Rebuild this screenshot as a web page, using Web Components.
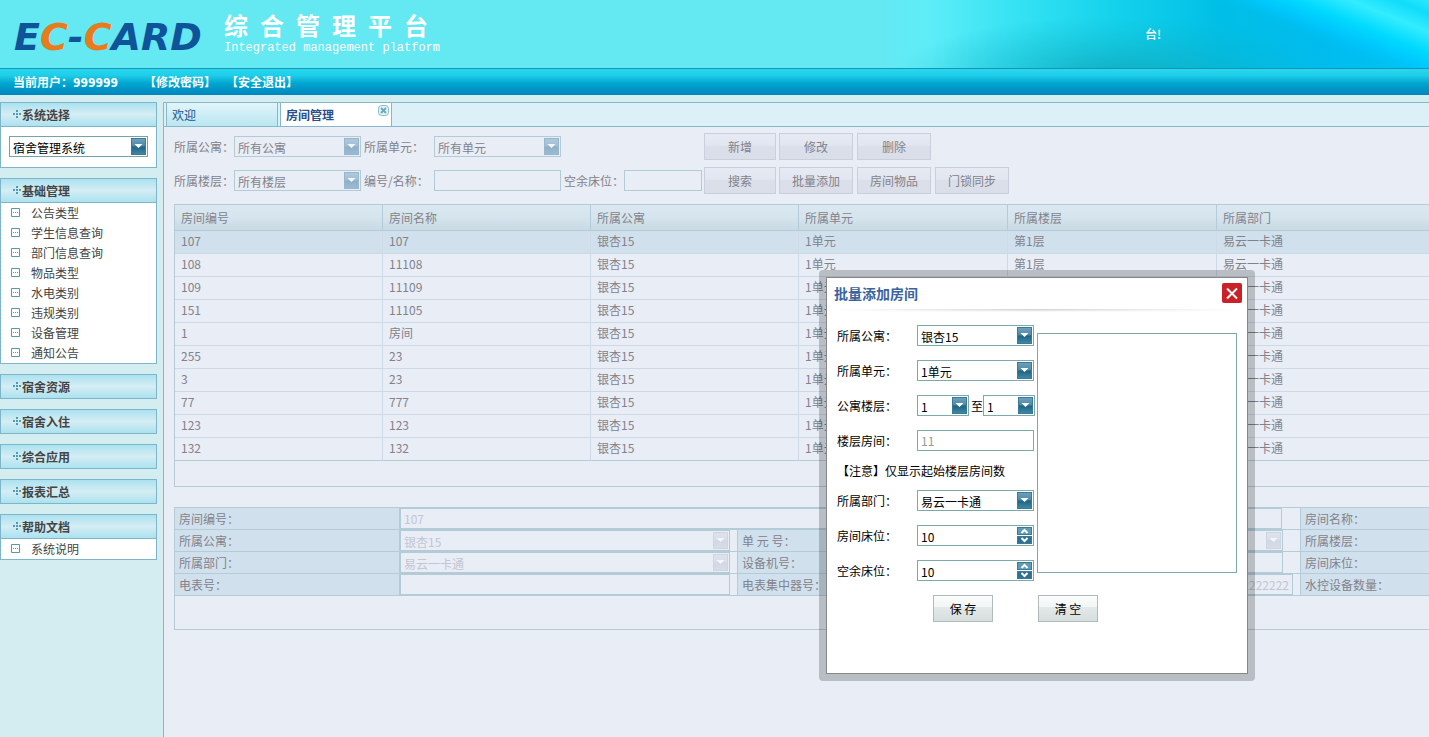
<!DOCTYPE html>
<html lang="zh-CN">
<head>
<meta charset="utf-8">
<title>EC-CARD 综合管理平台</title>
<style>
  html, body { margin: 0; height: 100%; }
  body { font: 12px/20px "Noto Sans CJK SC", sans-serif; color: #444; background: #d4edf0; }
</style>
</head>
<body>
<ec-app></ec-app>
<script>
const base = `
  :host, *, *::before, *::after { box-sizing: border-box; }
  a { color: inherit; text-decoration: none; }
  input, select, textarea, button { font: inherit; color: inherit; margin: 0; border-radius: 0; outline: 0; opacity: 1; }
  input, textarea { border: 1px solid var(--line); background: var(--field); padding: 0 3px; resize: none; }
  input { height: 21px; min-width: 0; line-height: 19px; }
  button { padding: 0; cursor: pointer; }
  .sel { display: inline-block; flex: none; position: relative; height: 21px; vertical-align: top; }
  .sel select { appearance: none; display: block; width: 100%; height: 21px; line-height: 19px; padding: 1px 20px 0 3px; border: 1px solid var(--line); background: var(--field); }
  .sel svg { position: absolute; right: 2px; top: 2px; width: 15px; height: 17px; background: var(--arrow); border: 1px solid var(--arrowline); pointer-events: none; }
`;
const arrow = '<svg viewBox="0 0 13 15" aria-hidden="true"><path d="M2.500 5h8l-4 4z" fill="var(--tip, #fff)"/></svg>';
const sel = (id, value, width, off) =>
  `<span class="sel" style="width:${width}px"><select id="${id}"${off ? ' disabled' : ''}><option>${value}</option></select>${arrow}</span>`;

const define = (name, css, html) => customElements.define(name, class extends HTMLElement {
  constructor() {
    super();
    const content = typeof html === 'function' ? html(this) : html;
    this.attachShadow({ mode: 'open' }).innerHTML = `<style>${base}${css}</style>${content}`;
  }
});

define('ec-banner', `
  :host { display: flex; align-items: center; position: relative; height: 68px; overflow: hidden; background: #64e8f2; color: #fff; }
  svg.sky { position: absolute; right: 0; top: 0; width: 549px; height: 68px; }
  .logo { position: relative; margin-left: 14px; padding-top: 6px; width: 210px; white-space: nowrap; font: italic bold 38px/38px "DejaVu Sans", sans-serif; color: #0f5499; }
  .logo b { color: #e87c1c; }
  .name { position: relative; }
  h1 { margin: 0; font: 700 24px/28px "Liberation Sans", "Noto Sans CJK SC", sans-serif; white-space: pre; }
  p { margin: 0; font: 12px/14px "Liberation Mono", monospace; }
  .news { position: absolute; right: 268px; top: 24px; line-height: 20px; font-weight: 500; }
`, `
  <svg class="sky" viewBox="0 0 549 68" preserveAspectRatio="none" aria-hidden="true">
    <defs>
      <linearGradient id="a"><stop offset="0" stop-color="#64e8f2"/><stop offset=".09" stop-color="#5eedf8"/><stop offset=".25" stop-color="#35e2f3"/><stop offset=".43" stop-color="#14d2ec"/><stop offset=".62" stop-color="#00bfe6"/><stop offset=".8" stop-color="#00bcee"/><stop offset="1" stop-color="#00c4f4"/></linearGradient>
      <radialGradient id="b" cx=".5" cy=".5" r=".5"><stop offset="0" stop-color="#10a4b8" stop-opacity=".8"/><stop offset="1" stop-color="#10b4c8" stop-opacity="0"/></radialGradient>
      <linearGradient id="c" gradientUnits="userSpaceOnUse" x1="400" y1="28" x2="430" y2="-47"><stop offset="0" stop-color="#00bdf0" stop-opacity="0"/><stop offset=".2" stop-color="#00c8ff" stop-opacity=".8"/><stop offset=".4" stop-color="#00daff"/><stop offset=".64" stop-color="#34ecff"/><stop offset=".85" stop-color="#10dcfa"/><stop offset="1" stop-color="#2ae8ff"/></linearGradient>
    </defs>
    <path fill="url(#a)" d="M0 0h549v68H0z"/>
    <ellipse cx="235" cy="76" rx="220" ry="60" fill="url(#b)"/>
    <path fill="url(#c)" d="M330 0L500 68h49V0z"/>
  </svg>
  <div class="logo">E<b>C</b>-<b>C</b>ARD</div>
  <div class="name"><h1>综\u2002合\u2002管\u2002理\u2002平\u2002台</h1><p>Integrated management platform</p></div>
  <div class="news">台!</div>
`);

define('ec-userbar', `
  :host { display: flex; align-items: center; height: 27px; padding-left: 13px; border-top: 1px solid #2190b4; background: linear-gradient(#25d8ef, #1fcde8 25%, #00a6d0 55%, #0086bd); color: #fff; font-weight: 700; }
  span { font-family: "DejaVu Sans Condensed", "DejaVu Sans", sans-serif; }
  .me { margin-right: 26px; } a { margin-right: 10px; }
`, `<div class="me">当前用户：<span>999999</span></div><a href="#">【修改密码】</a><a href="#">【安全退出】</a>`);

define('ec-panel', `
  :host { display: block; border: 1px solid #7fb5c9; background: #fff; }
  h2 { margin: 0; height: 23px; padding: 0 0 0 12px; display: flex; align-items: center; font-size: 12px; line-height: 20px; color: #444; background: linear-gradient(#abe2f0, #d5edf3 50%, #abe2f0); }
  svg { width: 9px; height: 9px; margin: 0; fill: #4e9bb3; }
  .body { border-top: 1px solid #7fb5c9; }
  :host([closed]) .body { display: none; }
`, el => `<h2><svg viewBox="0 0 9 9" aria-hidden="true"><path d="M3 0h2v2H3zM0 3h2v2H0zM3 3h2v2H3zM6 3h2v2H6zM3 6h2v2H3z"/></svg>${el.getAttribute('heading')}</h2><div class="body"><slot></slot></div>`);

define('ec-menu', `
  :host { display: block; }
  ul { list-style: none; margin: 0; padding: 0; }
  li { height: 20px; }
  a { display: flex; align-items: center; gap: 11px; padding-left: 10px; line-height: 20px; }
  svg { width: 9px; height: 9px; margin-bottom: 2px; }
`, el => `<ul>${el.getAttribute('items').split(' ').map(t =>
  `<li><a href="#"><svg viewBox="0 0 9 9" aria-hidden="true"><path d="M.5.5h8v8h-8z" fill="#fff" stroke="#4e9bb3"/><path d="M2 4h1v1H2zM4 4h1v1H4zM6 4h1v1H6z" fill="#4e9bb3"/></svg>${t}</a></li>`).join('')}</ul>`);

define('ec-sidebar', `
  :host { display: flex; flex-direction: column; gap: 10px; width: 157px; flex: none; --line: #72a5aa; --field: #fff; --arrow: linear-gradient(#6d9fba, #4c88a6 48%, #1c6385 52%, #4187a3); --arrowline: #3a7a99; }
  ec-panel[closed] { height: 25px; }
  .pick { height: 40px; padding: 9px 8px; color: #000; }
`, `
  <ec-panel heading="系统选择"><div class="pick">${sel('system', '宿舍管理系统', 139).replace('<select', '<select aria-label="系统选择"')}</div></ec-panel>
  <ec-panel heading="基础管理"><ec-menu items="公告类型 学生信息查询 部门信息查询 物品类型 水电类别 违规类别 设备管理 通知公告"></ec-menu></ec-panel>
  <ec-panel heading="宿舍资源" closed></ec-panel>
  <ec-panel heading="宿舍入住" closed></ec-panel>
  <ec-panel heading="综合应用" closed></ec-panel>
  <ec-panel heading="报表汇总" closed></ec-panel>
  <ec-panel heading="帮助文档"><ec-menu items="系统说明"></ec-menu></ec-panel>
`);

define('ec-tabs', `
  :host { display: flex; gap: 2px; height: 24px; padding-left: 2px; border-bottom: 1px solid #86b8c9; background: #dcf0f8; color: #27508c; }
  .tab { display: flex; justify-content: space-between; width: 112px; padding: 2px 2px 0 5px; border: solid #86b8c9; border-width: 0 1px; background: linear-gradient(#e2f5fa, #b9e7f1); }
  .on { background: #fff; font-weight: 700; }
  button { width: 11px; height: 11px; border: 0; background: none; display: block; }
  svg { display: block; }
`, `<div class="tab"><a href="#">欢迎</a></div><div class="tab on"><a href="#">房间管理</a>
  <button aria-label="关闭"><svg width="11" height="11" viewBox="0 0 11 11"><rect x=".5" y=".5" width="10" height="10" rx="3" fill="#e2f4f7" stroke="#86bcca"/><path d="M3 3l5 5M8 3l-5 5" stroke="#6fa9ba" stroke-width="2"/></svg></button></div>`);

define('ec-filter', `
  :host { display: block; }
  form { display: grid; grid-template-columns: 60px 130px 70px 130px 60px 80px 75px 78px 78px 74px; grid-auto-rows: 27px; row-gap: 7px; align-items: center; }
  label { white-space: nowrap; }
  input { width: 127px; } #spare { width: 78px; }
  button { width: 74px; height: 27px; border: 1px solid #cacfdd; background: linear-gradient(#e6eaf3, #e2e6f0 45%, #dadfea 50%, #d9dee9); }
  .first { width: 72px; grid-column: 7; }
`, `<form onsubmit="return false">
  <label for="apt">所属公寓：</label>${sel('apt', '所有公寓', 127)}
  <label for="unit">所属单元：</label>${sel('unit', '所有单元', 127)}
  <button class="first">新增</button><button>修改</button><button>删除</button>
  <label for="floor" style="grid-column:1">所属楼层：</label>${sel('floor', '所有楼层', 127)}
  <label for="name">编号/名称：</label><input id="name">
  <label for="spare">空余床位：</label><input id="spare">
  <button class="first">搜索</button><button>批量添加</button><button>房间物品</button><button>门锁同步</button>
</form>`);

const rooms = [['107','107'],['108','11108'],['109','11109'],['151','11105'],['1','房间'],['255','23'],['3','23'],['77','777'],['123','123'],['132','132']];
define('ec-grid', `
  :host { display: block; min-width: 1460px; border: 1px solid #b5cbd8; }
  table { width: 100%; table-layout: fixed; border-collapse: separate; border-spacing: 0; }
  th, td { padding: 0 6px; font-weight: 400; text-align: left; border-right: 1px solid #d0d9e8; }
  th { height: 26px; background: linear-gradient(#dbe8f1, #d5e4ed 50%, #c9dae4); border-color: #b5cbd8; border-bottom: 1px solid #b5cbd8; }
  td { height: 23px; padding-bottom: 2px; border-bottom: 1px solid #ced9e7; line-height: 20px; }
  .on td { background: #d0e1ed; }
  tr:last-child td { border-bottom-color: #b5cbd8; }
  .foot { height: 25px; }
`, `<table>
  <colgroup><col style="width:208px"><col style="width:208px"><col style="width:208px"><col style="width:209px"><col style="width:209px"><col></colgroup>
  <thead><tr>${['房间编号','房间名称','所属公寓','所属单元','所属楼层','所属部门'].map(t => `<th>${t}</th>`).join('')}</tr></thead>
  <tbody>${rooms.map((r, i) => `<tr${i ? '' : ' class="on"'}>${[...r, '银杏15', '1单元', '第1层', '易云一卡通'].map(t => `<td>${t}</td>`).join('')}</tr>`).join('')}</tbody>
</table><div class="foot"></div>`);

const text = (id, value, width, extra = '') => `<input id="${id}" value="${value}" disabled style="width:${width}px${extra}">`;
define('ec-detail', `
  :host { display: block; min-width: 1460px; border: 1px solid #b5cbd8;
    --arrow: linear-gradient(#dde2ed, #d8dde9 48%, #d2d7e4 52%, #d7dce8); --arrowline: #cfd4e1; --tip: #f4f6fb; }
  form { display: grid; grid-template-columns: 225px 337px 226px 337px 226px 1fr; }
  label, .f { height: 22px; border-bottom: 1px solid #b5cbd8; white-space: nowrap; }
  label { padding-left: 4px; line-height: 21px; background: #d0e1ed; border-left: 1px solid #b5cbd8; border-right: 1px solid #b5cbd8; }
  label.l { border-left: 0; }
  .f, .f select { color: #c3c6d1; }
  .f input, .f .sel { display: block; }
  .wide { grid-column: span 3; }
  .foot { height: 33px; }
`, `<form>
  <label class="l" for="no">房间编号：</label><div class="f wide">${text('no', '107', 882)}</div><label for="rn">房间名称：</label><div class="f">${text('rn', '', 120)}</div>
  <label class="l" for="a">所属公寓：</label><div class="f">${sel('a', '银杏15', 330, 1)}</div><label for="u">单 元 号：</label><div class="f">${sel('u', '1单元', 320, 1)}</div><label for="fl">所属楼层：</label><div class="f">${sel('fl', '第1层', 120, 1)}</div>
  <label class="l" for="d">所属部门：</label><div class="f">${sel('d', '易云一卡通', 330, 1)}</div><label for="m">设备机号：</label><div class="f">${text('m', '', 320)}</div><label for="bd">房间床位：</label><div class="f">${text('bd', '', 120)}</div>
  <label class="l" for="e">电表号：</label><div class="f">${text('e', '', 330)}</div><label for="ec">电表集中器号：</label><div class="f">${text('ec', '2222222', 330, ';text-align:right')}</div><label for="w">水控设备数量：</label><div class="f">${text('w', '', 120)}</div>
</form><div class="foot"></div>`);

define('ec-dialog', `
  :host { position: absolute; left: 819px; top: 270px; padding: 7px; width: 436px; border-radius: 4px; background: rgba(0, 0, 0, .2); color: #000;
    --line: #7ba9ac; --field: #fff; --arrow: linear-gradient(#6d9fba, #4c88a6 48%, #1c6385 52%, #4187a3); --arrowline: #3a7a99; --tip: #fff; }
  section { border: 1px solid #868686; background: #fff; min-height: 397px; }
  header { display: flex; justify-content: space-between; padding: 5px 5px 0 7px; height: 31px; }
  h2 { margin: 0; font-size: 14px; line-height: 20px; color: #3a649b; }
  .x { width: 20px; height: 20px; border: 0; border-radius: 2px; background: #c92127; }
  .x svg { display: block; }
  .rule { height: 3px; margin: 0 7px; background: linear-gradient(90deg, #fff, rgba(255,255,255,0) 50%, #fff), linear-gradient(#ccc, #eee 66%, #fff); }
  .cols { display: flex; gap: 3px; padding: 13px 0 0 10px; }
  .row { display: flex; height: 35px; line-height: 21px; width: 197px; }
  .row label { width: 80px; flex: none; white-space: nowrap; }
  .row .to { width: 14px; padding-left: 2px; }
  .row input { width: 117px; height: 21px; }
  #count { color: #999; }
  .note { margin: 0; height: 25px; line-height: 12px; }
  .spin { position: relative; height: 21px; }
  .spin input { appearance: textfield; display: block; padding-top: 1px; }
  .spin input::-webkit-inner-spin-button { display: none; }
  .spin div { position: absolute; right: 2px; top: 2px; display: grid; gap: 1px; }
  .spin button { display: block; width: 15px; height: 8px; border: 1px solid #3a7a99; background: #619ab5; }
  .spin button + button { background: #2d7294; }
  .spin svg { display: block; fill: none; stroke: #fff; stroke-width: 2; }
  textarea { width: 200px; height: 240px; margin-top: 8px; flex: none; }
  footer { display: flex; gap: 45px; padding: 0 0 0 106px; }
  footer button { width: 60px; height: 27px; border: 1px solid #b0babc; background: linear-gradient(#fcfdfd, #f3f6f6 42%, #e3e8e8 46%, #d7dede); }
`, (() => {
  const spin = id => `<div class="spin"><input id="${id}" type="number" value="10"><div>
    <button type="button" aria-label="增加"><svg width="13" height="6" viewBox="0 0 13 6"><path d="M3.500 5L6.500 2L9.500 5"/></svg></button>
    <button type="button" aria-label="减少"><svg width="13" height="6" viewBox="0 0 13 6"><path d="M3.500 1L6.500 4L9.500 1"/></svg></button></div></div>`;
  return `<section role="dialog" aria-labelledby="t">
  <header><h2 id="t">批量添加房间</h2><button class="x" aria-label="关闭"><svg width="20" height="20" viewBox="0 0 20 20"><path d="M5 5.500L15 15.500M15 5.500L5 15.500" stroke="#fff" stroke-width="2"/></svg></button></header>
  <div class="rule"></div>
  <div class="cols"><form>
    <div class="row"><label for="apt">所属公寓：</label>${sel('apt', '银杏15', 117)}</div>
    <div class="row"><label for="unit">所属单元：</label>${sel('unit', '1单元', 117)}</div>
    <div class="row"><label for="from">公寓楼层：</label>${sel('from', '1', 52)}<label class="to" for="to">至</label>${sel('to', '1', 52)}</div>
    <div class="row"><label for="count">楼层房间：</label><input id="count" value="11" readonly></div>
    <p class="note">【注意】仅显示起始楼层房间数</p>
    <div class="row"><label for="dept">所属部门：</label>${sel('dept', '易云一卡通', 117)}</div>
    <div class="row"><label for="beds">房间床位：</label>${spin('beds')}</div>
    <div class="row"><label for="free">空余床位：</label>${spin('free')}</div>
  </form><textarea aria-label="房间列表"></textarea></div>
  <footer><button>保 存</button><button>清 空</button></footer>
</section>`;
})());
customElements.define('ec-app', class extends HTMLElement {
  constructor() {
    super();
    this.attachShadow({ mode: 'open' }).innerHTML = `<style>
      :host { display: flex; flex-direction: column; position: relative; min-height: 100vh; overflow: hidden; }
      .page { display: flex; flex: 1; gap: 6px; padding-top: 7px; }
      main { flex: 1; min-width: 0; overflow: hidden; border: solid #86b8c9; border-width: 1px 0 0 1px; background: #e8edf6; color: #83828b;
        --line: #b3cad7; --field: #e8edf6; --arrow: linear-gradient(#b0c8dc, #a2bed4 48%, #8cafc8 52%, #9cbbd1); --arrowline: #98b6cd; --tip: #f4f8fc; }
      .work { padding: 6px 0 0 10px; }
      ec-grid { margin-top: 10px; }
      ec-detail { margin-top: 20px; }
    </style>
    <ec-banner></ec-banner><ec-userbar></ec-userbar>
    <div class="page"><ec-sidebar></ec-sidebar>
      <main><ec-tabs></ec-tabs><div class="work"><ec-filter></ec-filter><ec-grid></ec-grid><ec-detail></ec-detail></div></main>
    </div>
    <ec-dialog></ec-dialog>`;
  }
});
</script>
</body>
</html>
